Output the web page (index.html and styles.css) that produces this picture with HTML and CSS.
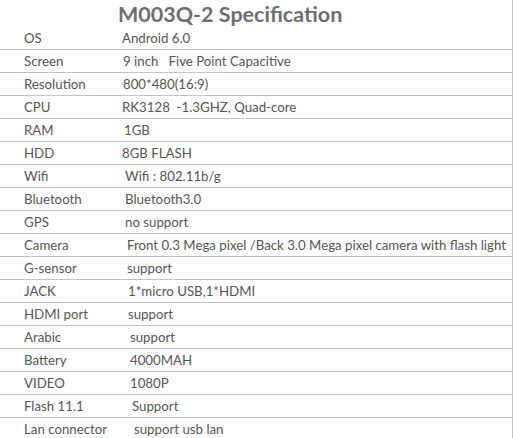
FILE: index.html
```html
<!DOCTYPE html>
<html>
<head>
<meta charset="utf-8">
<link rel="stylesheet" href="styles.css">
</head>
<body>
<div class="sheet">
  <div class="title">M003Q-2 Specification</div>
  <div class="rows">
    <div class="row"><span class="label">OS</span><span class="value">Android 6.0</span></div>
    <div class="row"><span class="label">Screen</span><span class="value i1">9 inch&nbsp;&nbsp; Five Point Capacitive</span></div>
    <div class="row"><span class="label">Resolution</span><span class="value i1">800*480(16:9)</span></div>
    <div class="row"><span class="label">CPU</span><span class="value">RK3128&nbsp; -1.3GHZ, Quad-core</span></div>
    <div class="row"><span class="label">RAM</span><span class="value i2">1GB</span></div>
    <div class="row"><span class="label">HDD</span><span class="value">8GB FLASH</span></div>
    <div class="row"><span class="label">Wifi</span><span class="value i3">Wifi : 802.11b/g</span></div>
    <div class="row"><span class="label">Bluetooth</span><span class="value i3">Bluetooth3.0</span></div>
    <div class="row"><span class="label">GPS</span><span class="value i3">no support</span></div>
    <div class="row"><span class="label">Camera</span><span class="value i5">Front 0.3 Mega pixel /Back 3.0 Mega pixel camera with flash light</span></div>
    <div class="row"><span class="label">G-sensor</span><span class="value i5">support</span></div>
    <div class="row"><span class="label">JACK</span><span class="value i6">1*micro USB,1*HDMI</span></div>
    <div class="row"><span class="label">HDMI port</span><span class="value i6">support</span></div>
    <div class="row"><span class="label">Arabic</span><span class="value i8">support</span></div>
    <div class="row"><span class="label">Battery</span><span class="value i8">4000MAH</span></div>
    <div class="row"><span class="label">VIDEO</span><span class="value i8">1080P</span></div>
    <div class="row"><span class="label">Flash 11.1</span><span class="value i10">Support</span></div>
    <div class="row"><span class="label">Lan connector</span><span class="value i12">support usb lan</span></div>
  </div>
</div>
</body>
</html>
```
FILE: styles.css
```css
html, body {
  margin: 0;
  padding: 0;
  background: #fff;
}
.sheet {
  width: 513px;
  height: 438px;
  box-sizing: border-box;
  border-right: 1px solid #c4c4c4;
  overflow: hidden;
  font-family: Lato, "Open Sans", sans-serif;
  color: #555;
}
.title {
  height: 27px;
  box-sizing: border-box;
  padding-left: 118px;
  padding-top: 1px;
  font-size: 21.5px;
  font-weight: bold;
  line-height: 27px;
  color: #6e6e6e;
}
.rows {
  display: flex;
  flex-direction: column;
}
.row {
  display: flex;
  height: 23px;
  box-sizing: border-box;
  border-bottom: 1px solid #c4c4c4;
  align-items: center;
  font-size: 13.25px;
  white-space: nowrap;
}
.label {
  width: 122px;
  flex: none;
  padding-left: 24px;
  box-sizing: border-box;
}
.value { padding-left: 0; }
.i1 { padding-left: 1px; }
.i2 { padding-left: 2px; }
.i3 { padding-left: 3px; }
.i5 { padding-left: 5px; }
.i6 { padding-left: 6px; }
.i8 { padding-left: 8px; }
.i10 { padding-left: 10px; }
.i12 { padding-left: 12px; }
```
